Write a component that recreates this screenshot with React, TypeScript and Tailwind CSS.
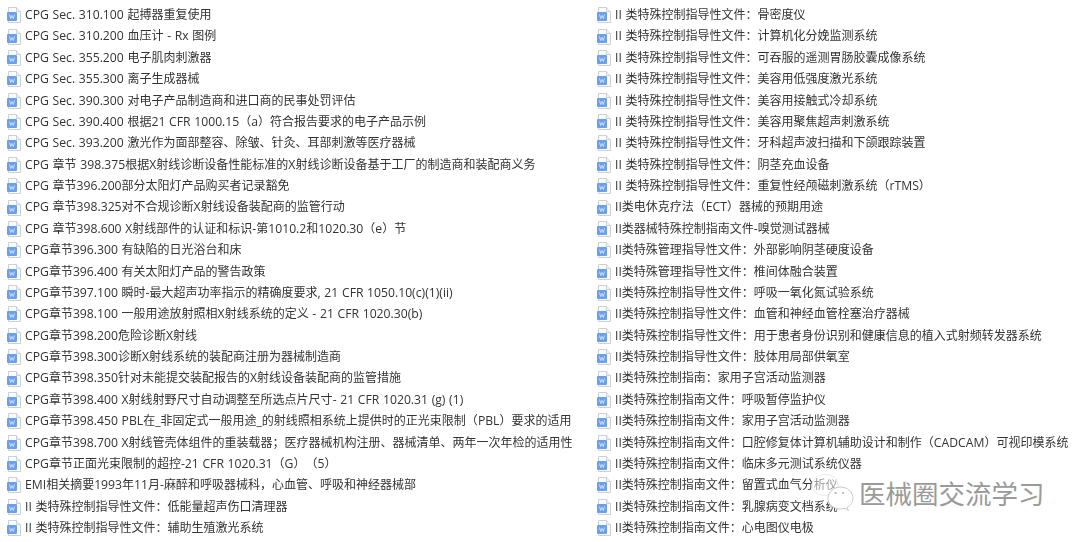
const leftFiles = [
  "CPG Sec. 310.100 起搏器重复使用",
  "CPG Sec. 310.200 血压计 - Rx 图例",
  "CPG Sec. 355.200 电子肌肉刺激器",
  "CPG Sec. 355.300 离子生成器械",
  "CPG Sec. 390.300 对电子产品制造商和进口商的民事处罚评估",
  "CPG Sec. 390.400 根据21 CFR 1000.15（a）符合报告要求的电子产品示例",
  "CPG Sec. 393.200 激光作为面部整容、除皱、针灸、耳部刺激等医疗器械",
  "CPG 章节 398.375根据X射线诊断设备性能标准的X射线诊断设备基于工厂的制造商和装配商义务",
  "CPG 章节396.200部分太阳灯产品购买者记录豁免",
  "CPG 章节398.325对不合规诊断X射线设备装配商的监管行动",
  "CPG 章节398.600 X射线部件的认证和标识-第1010.2和1020.30（e）节",
  "CPG章节396.300 有缺陷的日光浴台和床",
  "CPG章节396.400 有关太阳灯产品的警告政策",
  "CPG章节397.100 瞬时-最大超声功率指示的精确度要求, 21 CFR 1050.10(c)(1)(ii)",
  "CPG章节398.100 一般用途放射照相X射线系统的定义 - 21 CFR 1020.30(b)",
  "CPG章节398.200危险诊断X射线",
  "CPG章节398.300诊断X射线系统的装配商注册为器械制造商",
  "CPG章节398.350针对未能提交装配报告的X射线设备装配商的监管措施",
  "CPG章节398.400 X射线射野尺寸自动调整至所选点片尺寸- 21 CFR 1020.31 (g) (1)",
  "CPG章节398.450 PBL在_非固定式一般用途_的射线照相系统上提供时的正光束限制（PBL）要求的适用",
  "CPG章节398.700 X射线管壳体组件的重装载器；医疗器械机构注册、器械清单、两年一次年检的适用性",
  "CPG章节正面光束限制的超控-21 CFR 1020.31（G）　（5）",
  "EMI相关摘要1993年11月-麻醉和呼吸器械科，心血管、呼吸和神经器械部",
  "II 类特殊控制指导性文件：低能量超声伤口清理器",
  "II 类特殊控制指导性文件：辅助生殖激光系统",
];

const rightFiles = [
  "II 类特殊控制指导性文件：骨密度仪",
  "II 类特殊控制指导性文件：计算机化分娩监测系统",
  "II 类特殊控制指导性文件：可吞服的遥测胃肠胶囊成像系统",
  "II 类特殊控制指导性文件：美容用低强度激光系统",
  "II 类特殊控制指导性文件：美容用接触式冷却系统",
  "II 类特殊控制指导性文件：美容用聚焦超声刺激系统",
  "II 类特殊控制指导性文件：牙科超声波扫描和下颌跟踪装置",
  "II 类特殊控制指导性文件：阴茎充血设备",
  "II 类特殊控制指导性文件：重复性经颅磁刺激系统（rTMS）",
  "II类电休克疗法（ECT）器械的预期用途",
  "II类器械特殊控制指南文件-嗅觉测试器械",
  "II类特殊管理指导性文件：外部影响阴茎硬度设备",
  "II类特殊管理指导性文件：椎间体融合装置",
  "II类特殊控制指导性文件：呼吸一氧化氮试验系统",
  "II类特殊控制指导性文件：血管和神经血管栓塞治疗器械",
  "II类特殊控制指导性文件：用于患者身份识别和健康信息的植入式射频转发器系统",
  "II类特殊控制指导性文件：肢体用局部供氧室",
  "II类特殊控制指南：家用子宫活动监测器",
  "II类特殊控制指南文件：呼吸暂停监护仪",
  "II类特殊控制指南文件：家用子宫活动监测器",
  "II类特殊控制指南文件：口腔修复体计算机辅助设计和制作（CADCAM）可视印模系统",
  "II类特殊控制指南文件：临床多元测试系统仪器",
  "II类特殊控制指南文件：留置式血气分析仪",
  "II类特殊控制指南文件：乳腺病变文档系统",
  "II类特殊控制指南文件：心电图仪电极",
];

const WordIcon = () => (
  <svg width="14" height="16" viewBox="0 0 14 16" className="shrink-0">
    <path d="M1.500 .5H9.500L13.500 4.500V15.500H1.500Z" fill="#fbfcfe" stroke="#ccd0d6" />
    <path d="M9.500 .5V4.500H13.500" fill="#f0f2f5" stroke="#ccd0d6" />
    <rect x="0" y="5" width="10" height="9" rx="1" fill="#6a9fec" />
    <path d="M2.500 7.500 3.700 11.500 5 8.500 6.300 11.500 7.500 7.500" fill="none" stroke="#e3edfc" strokeWidth="0.8" />
  </svg>
);

// latin runs sit a bit larger than the 12px cjk in the original
const FileName = ({ name }: { name: string }) => (
  <span className="whitespace-nowrap">
    {name.split(/([\x00-\x7f]+)/).map((part, i) =>
      i % 2 === 1 ? (
        <span key={i} className="text-[12.200px] [word-spacing:0.500px]">
          {part}
        </span>
      ) : (
        part
      )
    )}
  </span>
);

const FileRow = ({ name }: { name: string }) => (
  <div className="flex h-[21.375px] items-center gap-[4px]">
    <WordIcon />
    <FileName name={name} />
  </div>
);

const App = () => {
  return (
    <div className="relative h-[542px] w-[1080px] overflow-hidden bg-white font-['Open_Sans','Noto_Sans_CJK_SC',sans-serif] text-[12px] text-[#333333]">
      <div className="grid grid-cols-[590px_490px] pt-[4.500px] blur-[0.3px]">
        <div className="flex flex-col pl-[7px]">
          {leftFiles.map((name) => (
            <FileRow key={name} name={name} />
          ))}
        </div>
        <div className="flex flex-col pl-[7px]">
          {rightFiles.map((name) => (
            <FileRow key={name} name={name} />
          ))}
        </div>
      </div>
      {/* wechat watermark */}
      <div className="absolute left-[809px] top-[474px] flex items-center gap-[4px]">
        <svg width="46" height="40" viewBox="0 0 46 40" fill="none">
          <ellipse cx="16" cy="11" rx="13" ry="10.500" fill="#ffffff" fillOpacity="0.5" stroke="#ececec" />
          <circle cx="11" cy="9" r="1.300" fill="#c4c4c4" />
          <circle cx="22" cy="9" r="1.300" fill="#c4c4c4" />
          <path d="M38 33.500C41.500 31.500 44 28.500 44 24.500C44 18 38 13 31.500 13C25 13 19 18 19 24.500C19 31 25 35 31.500 35C33 35 34.500 34.800 36 34.300L39.500 36.500Z" fill="#ffffff" stroke="#c9c9c9" />
          <circle cx="26.500" cy="19" r="1" fill="#a8a8a8" />
          <circle cx="34" cy="19" r="1" fill="#a8a8a8" />
        </svg>
        <span className="whitespace-nowrap text-[26.500px] leading-none text-[#9a9a9a] [text-shadow:1px_1px_0_#ffffff]">
          医械圈交流学习
        </span>
      </div>
    </div>
  );
};

export default App;
